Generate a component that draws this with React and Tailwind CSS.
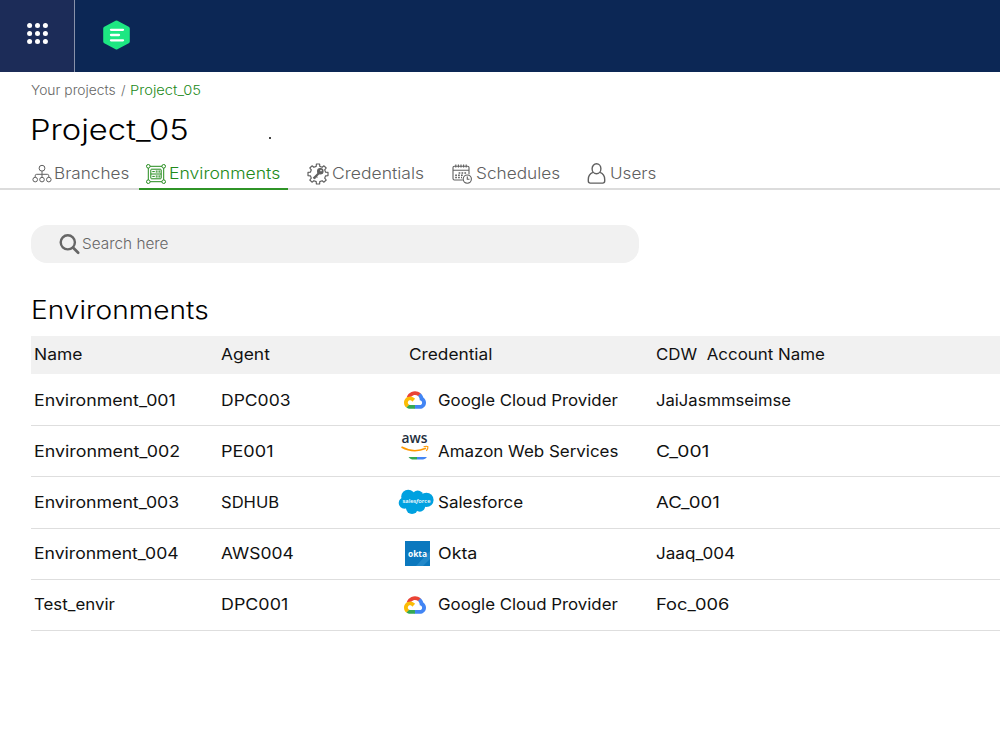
import React, { useLayoutEffect, useRef, useState } from 'react';

// Text stretched horizontally so it fills the given width
const WideText = ({ width, children, className = '' }) => {
    const ref = useRef(null);
    const [scale, setScale] = useState(1);

    useLayoutEffect(() => {
        setScale(width / ref.current.offsetWidth);
    }, [width]);

    return (
        <span className={`block whitespace-pre ${className}`} style={{ width }}>
            <span
                ref={ref}
                className="inline-block origin-left"
                style={{ transform: `scaleX(${scale})` }}
            >
                {children}
            </span>
        </span>
    );
};

const BranchesIcon = () => (
    <svg className="w-5 h-5 shrink-0" viewBox="0 0 20 20" fill="none" stroke="currentColor" strokeWidth="1">
        <circle cx="10" cy="4.2" r="2.9" />
        <circle cx="3.2" cy="15.6" r="2.3" />
        <circle cx="10" cy="15.6" r="2.3" />
        <circle cx="16.8" cy="15.6" r="2.3" />
        <path d="M10 7.1v6.2M3.2 13.3v-1.5q0-1.5 1.5-1.5h10.6q1.5 0 1.5 1.5v1.5" />
    </svg>
);

const EnvironmentsIcon = () => (
    <svg className="w-5 h-5 shrink-0" viewBox="0 0 20 20" fill="none" stroke="currentColor" strokeWidth="1">
        <circle cx="2.3" cy="2.3" r="1.8" />
        <circle cx="17.7" cy="2.3" r="1.8" />
        <circle cx="2.3" cy="17.7" r="1.8" />
        <circle cx="17.7" cy="17.7" r="1.8" />
        <path d="M4.1 2.3h11.8M4.1 17.7h11.8M2.3 4.1v11.8M17.7 4.1v11.8" />
        <rect x="4.8" y="5.2" width="10.4" height="9.6" rx=".8" />
        <path d="M4.8 10h10.4M6.3 7.6h2.5M6.3 12.4h2.5" />
        <path d="M10.3 6.4v2.3M12 6.4v2.3M13.7 6.4v2.3M10.3 11.3v2.3M12 11.3v2.3M13.7 11.3v2.3" strokeWidth=".9" />
    </svg>
);

const CredentialsIcon = () => (
    <svg className="w-[22px] h-[22px] shrink-0" viewBox="0 0 22 22" fill="none" stroke="currentColor" strokeWidth="1.2" strokeLinejoin="round">
        <path d="M9.2 3.4 9.4 1h3.2l.2 2.4 2.3.9 1.9-1.5 2.2 2.2-1.5 1.9.9 2.3 2.4.2v3.2l-2.4.2-.9 2.3 1.5 1.9-2.2 2.2-1.9-1.5-2.3.9-.2 2.4H9.4l-.2-2.4-2.3-.9L5 19.2 2.8 17l1.5-1.9-.9-2.3L1 12.6V9.4l2.4-.2.9-2.3L2.8 5 5 2.8l1.9 1.5z" />
        <circle cx="13.3" cy="8.3" r="2.7" fill="currentColor" />
        <circle cx="14" cy="7.6" r=".8" fill="white" stroke="none" />
        <path d="m11.8 10.2-5.3 5.3" strokeWidth="2.2" />
        <path d="m8.7 12.8 1.7 1.7M7 14.5l1.3 1.3" strokeWidth="1.1" />
    </svg>
);

const SchedulesIcon = () => (
    <svg className="w-5 h-5 shrink-0" viewBox="0 0 20 20" fill="none" stroke="currentColor" strokeWidth="1.1">
        <path d="M10.8 16H2.4Q1 16 1 14.6V3.6q0-1.4 1.4-1.4h13.2q1.4 0 1.4 1.4v6.6M1 6.2h16" />
        <path d="M3.8.5v3M6.4.5v3M9 .5v3M11.6.5v3M14.2.5v3" />
        <path d="M6.6 9h8.6M3.2 11.3h8.6M3.2 13.6h6.8" strokeWidth="1.5" strokeDasharray="1.7 1.2" />
        <circle cx="15.3" cy="15.1" r="4.1" fill="white" />
        <path d="M15.3 12.6v2.7h2.2" />
    </svg>
);

const UsersIcon = () => (
    <svg className="w-[19px] h-[21px] shrink-0" viewBox="0 0 19 21" fill="none" stroke="currentColor" strokeWidth="1.4">
        <ellipse cx="9.5" cy="5.8" rx="4.4" ry="5" />
        <path d="M5.9 9.4Q1.3 11.3 1.3 16.4v1.7q0 2 2 2h12.4q2 0 2-2v-1.7q0-5.1-4.6-7" />
    </svg>
);

const GoogleCloudLogo = () => (
    <svg className="w-[22px] h-[18px]" viewBox="0 0 256 206">
        <path fill="#ea4335" d="M170.3 56.8 192.5 34.6 194 25.2C153.4-11.7 89-7.5 52.4 33.9 42.3 45.4 34.7 59.8 30.7 74.6l8-1.1 44.5-7.4 3.4-3.5C106.4 40.9 139.9 37.9 162.8 56.4z" />
        <path fill="#4285f4" d="M224.2 73.9C219.1 55.1 208.6 38.1 194 25.2l-31.2 31.2c13.1 10.8 20.6 27 20.3 44.1v5.5c15.4 0 27.8 12.4 27.8 27.8s-12.4 27.5-27.8 27.5h-55.6l-5.5 5.9v33.4l5.5 5.2h55.6c40 .3 72.6-31.5 72.9-71.4.2-24.2-11.8-46.9-31.8-60.5" />
        <path fill="#34a853" d="M71.9 205.8h55.6v-44.5H71.9c-4 0-7.9-.9-11.5-2.5l-8 2.5-22.3 22.2-2 7.5c12.6 9.5 28 14.9 43.8 14.8" />
        <path fill="#fbbc05" d="M71.9 61.4C31.9 61.7-.2 94.2 0 134.2c.1 22.3 10.5 43.2 28.2 56.8l32.3-32.2c-14-6.3-20.2-22.8-13.9-36.8s22.8-20.2 36.8-13.9c6.1 2.8 11.1 7.8 13.8 13.9l32.3-32.2C115.8 71.8 94.5 61.3 71.9 61.4" />
    </svg>
);

const AwsLogo = () => (
    <svg className="w-[34px] h-[38px] -mt-2" viewBox="0 -4 34 38">
        <text x="3.5" y="11" fontFamily="Open Sans, sans-serif" fontSize="14" fontWeight="600" textLength="26" lengthAdjust="spacingAndGlyphs" fill="#252f3e">aws</text>
        <path d="M3.5 15q12 6.6 24.5 1.2" fill="none" stroke="#f90" strokeWidth="1.5" />
        <path d="M25.6 14.8q3-1 4.3-.1.4 2-1.6 4.1" fill="none" stroke="#f90" strokeWidth="1.1" />
        <path d="M10.5 25H19v2.4h-5q-2.4-.4-3.5-2.4z" fill="#34a853" />
        <path d="M19 25h10q-1.5 2.2-4 2.4h-6z" fill="#4285f4" />
    </svg>
);

const SalesforceLogo = () => (
    <svg className="w-9 h-[26px] ml-[2px] shrink-0" viewBox="0 0 36 26">
        <g fill="#00a1e0">
            <circle cx="10.2" cy="7.8" r="7" />
            <circle cx="19.7" cy="7.3" r="5.8" />
            <circle cx="28.4" cy="10.9" r="7.2" />
            <circle cx="6.4" cy="14" r="5.7" />
            <circle cx="14" cy="19" r="6" />
            <circle cx="21.8" cy="17.3" r="5.4" />
            <path d="M7 7h20v10H8z" />
        </g>
        <text x="4.5" y="14" fontFamily="Open Sans, sans-serif" fontSize="6" fontWeight="600" textLength="28" lengthAdjust="spacingAndGlyphs" fill="white">
            sales<tspan fontStyle="italic">f</tspan>orce
        </text>
    </svg>
);

const OktaLogo = () => (
    <svg className="w-[25px] h-[25px] ml-[5px]" viewBox="0 0 25 25">
        <path d="M0 0h25v25H0z" fill="#0b78be" />
        <path d="M25 10v15H11z" fill="#2389ca" />
        <path d="M25 18v7h-7z" fill="#0b78be" />
        <text x="3" y="15.5" fontFamily="Open Sans, sans-serif" fontSize="8.5" fontWeight="700" textLength="19" lengthAdjust="spacingAndGlyphs" fill="white">okta</text>
    </svg>
);

const tabs = [
    { label: 'Branches', width: 75, Icon: BranchesIcon, box: 'ml-8 gap-[2px]' },
    { label: 'Environments', width: 111, Icon: EnvironmentsIcon, box: 'ml-[9.5px] pl-[7px] pr-2 gap-[3px]', active: true },
    { label: 'Credentials', width: 92, Icon: CredentialsIcon, box: 'ml-[19.5px] gap-[3px]' },
    { label: 'Schedules', width: 84, Icon: SchedulesIcon, box: 'ml-7 gap-1' },
    { label: 'Users', width: 46, Icon: UsersIcon, box: 'ml-[27px] gap-[4px]' },
];

const rows = [
    { name: ['Environment_001', 142], agent: ['DPC003', 70], Logo: GoogleCloudLogo, credential: ['Google Cloud Provider', 180], account: ['JaiJasmmseimse', 135] },
    { name: ['Environment_002', 146], agent: ['PE001', 53], Logo: AwsLogo, credential: ['Amazon Web Services', 180], account: ['C_001', 53] },
    { name: ['Environment_003', 145], agent: ['SDHUB', 58], Logo: SalesforceLogo, credential: ['Salesforce', 85], account: ['AC_001', 64] },
    { name: ['Environment_004', 145], agent: ['AWS004', 73], Logo: OktaLogo, credential: ['Okta', 39], account: ['Jaaq_004', 79] },
    { name: ['Test_envir', 81], agent: ['DPC001', 67], Logo: GoogleCloudLogo, credential: ['Google Cloud Provider', 180], account: ['Foc_006', 73] },
];

const Header = () => (
    <header className="h-[72px] bg-[#0c2755] flex items-center">
        <div className="w-[75px] h-full bg-[#1c2c58] border-r-[1.5px] border-[#8892aa] flex items-center pl-[27px] pb-[5px]">
            <svg className="w-[21px] h-[21px]" viewBox="0 0 21 21" fill="white">
                {[2.6, 10.5, 18.4].map((y) =>
                    [2.6, 10.5, 18.4].map((x) => <circle key={`${x}-${y}`} cx={x} cy={y} r="2.5" />)
                )}
            </svg>
        </div>
        <svg className="w-[27px] h-[30px] ml-7 -mt-0.5" viewBox="0 0 27 30">
            <path d="M13.5 2.5 24.8 8.5v13l-11.3 6-11.3-6v-13z" fill="#1de782" stroke="#1de782" strokeWidth="4" strokeLinejoin="round" />
            <path d="M8 9.8h12M8 15h8M8 20.3h12" stroke="white" strokeWidth="2.3" strokeLinecap="round" />
        </svg>
    </header>
);

const App = () => {
    return (
        <div className="h-[750px] overflow-hidden bg-white text-[#111] font-['Inter','Liberation_Sans',sans-serif] font-[360]">
            <Header />

            {/* Breadcrumb */}
            <nav className="h-[36px] pl-[31px] flex items-center text-[13px] leading-none text-[#666]">
                <WideText width={85}>Your projects</WideText>
                <WideText width={5} className="ml-[5px]">/</WideText>
                <WideText width={71} className="ml-1 text-[#228a1a]">Project_05</WideText>
            </nav>

            {/* Title */}
            <div className="h-11 pl-[30px] flex items-center text-[28px] leading-none text-black">
                <WideText width={159}>Project_05</WideText>
                <span className="w-[2px] h-[2px] mt-[15px] ml-20 bg-[#444]" />
            </div>

            {/* Tabs */}
            <div className="h-[38px] flex border-b-2 border-[#dcdcdc] text-base leading-none text-[#606060]">
                {tabs.map(({ label, width, Icon, box, active }) => (
                    <div
                        key={label}
                        className={`h-[38px] flex items-center ${box} ${active ? 'pt-[7px] border-b-2 border-[#2f9427] text-[#228a1a]' : 'pt-[7px] pb-[2px]'}`}
                    >
                        <Icon />
                        <WideText width={width} className="pb-[1px]">{label}</WideText>
                    </div>
                ))}
            </div>

            {/* Search Bar */}
            <div className="mt-[35px] ml-[31px] w-[608px] h-[38px] pl-7 rounded-2xl bg-[#f1f1f1] flex items-center text-[15px] leading-none text-[#666]">
                <svg className="w-[22px] h-[22px] mr-[1px]" viewBox="0 0 22 22" fill="none" stroke="#666" strokeWidth="2.4" strokeLinecap="round">
                    <circle cx="8.8" cy="9.3" r="7.1" />
                    <path d="m14.2 14.8 5 5" strokeWidth="2.7" />
                </svg>
                <WideText width={87} className="pb-[2px]">Search here</WideText>
            </div>

            <h1 className="mt-8 pl-[31px] h-[30px] flex items-center text-[25px] leading-none text-black font-[360]">
                <WideText width={177.5}>Environments</WideText>
            </h1>

            {/* Environments table */}
            <div className="mt-[11px] ml-[31px] text-base leading-none font-normal">
                <div className="h-[38px] mb-[1px] pb-[3px] pl-[3px] grid grid-cols-[187px_188px_247px_1fr] items-center bg-[#f1f1f1]">
                    <WideText width={48}>Name</WideText>
                    <WideText width={49}>Agent</WideText>
                    <WideText width={83}>Credential</WideText>
                    <WideText width={169}>CDW  Account Name</WideText>
                </div>
                {rows.map(({ name, agent, Logo, credential, account }, i) => (
                    <div
                        key={i}
                        className="h-[51.2px] pl-[3px] grid grid-cols-[187px_176px_41px_218px_1fr] items-center border-b border-[#dedede]"
                    >
                        <WideText width={name[1]} className="pb-[1px]">{name[0]}</WideText>
                        <WideText width={agent[1]} className="pb-[1px]">{agent[0]}</WideText>
                        <div className="w-9 flex justify-center">
                            <Logo />
                        </div>
                        <WideText width={credential[1]} className="pb-[1px]">{credential[0]}</WideText>
                        <WideText width={account[1]} className="pb-[1px]">{account[0]}</WideText>
                    </div>
                ))}
            </div>
        </div>
    );
};

export default App;
